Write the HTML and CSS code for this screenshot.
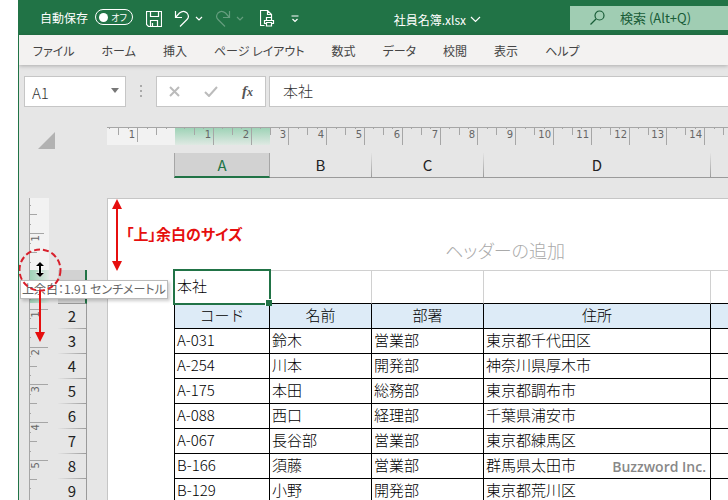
FILE: index.html
```html
<!DOCTYPE html>
<html lang="ja">
<head>
  <meta charset="UTF-8">
  <title>社員名簿.xlsx</title>
  <link rel="stylesheet" href="styles.css">
</head>
<body>

  <div class="app">
    <header class="titlebar">
      <label class="autosave">
        自動保存
        <span class="toggle"><input type="checkbox"><span>オフ</span></span>
      </label>
      <div class="quick">
        <button class="save" aria-label="上書き保存">
          <svg width="16" height="16" viewBox="0 0 16 16"><path d="M.5 .5h15v15h-13l-2-2zM4.500 .5v5h8v-5M4.500 15.500v-6h7v6M6.500 15v-3"/></svg>
        </button>
        <button class="undo" aria-label="元に戻す">
          <svg width="16" height="18" viewBox="0 0 16 18"><path d="M1.500 1v6.500h6.500M1.500 7.500l4-4.500c3-2.500 6-1.500 7.500 0 2 2.500 1.500 5 0 6.500l-7 7"/></svg>
        </button>
        <button class="drop" aria-label="元に戻す一覧">
          <svg width="8" height="5" viewBox="0 0 8 5"><path d="M1 1l3 3 3-3"/></svg>
        </button>
        <button class="redo" aria-label="やり直し" disabled>
          <svg width="16" height="18" viewBox="0 0 16 18"><path d="M14.500 1v6.500h-6.500M14.500 7.500l-4-4.500c-3-2.500-6-1.500-7.500 0-2 2.500-1.500 5 0 6.500l7 7"/></svg>
        </button>
        <button class="drop" aria-label="やり直し一覧" disabled>
          <svg width="8" height="5" viewBox="0 0 8 5"><path d="M1 1l3 3 3-3"/></svg>
        </button>
        <button class="print" aria-label="印刷プレビュー">
          <svg width="15" height="17" viewBox="0 0 15 17"><path d="M4.500 15.500h-4v-15h7l4 4v3M7.500 .5v4h4M6.500 10.500v-3h5v3M6.500 13.500h-2v-3h9v3h-2M6.500 12.500h5v3.500h-5z"/></svg>
        </button>
        <button class="more" aria-label="ツールバーのカスタマイズ">
          <svg width="8" height="8" viewBox="0 0 8 8"><path d="M.5 1h7M1.500 4l2.500 2.500 2.500-2.500"/></svg>
        </button>
      </div>
      <button class="filename">社員名簿.xlsx
        <svg width="11" height="7" viewBox="0 0 11 7"><path d="M1 1l4.500 4.500 4.500-4.500"/></svg>
      </button>
      <label class="search">
        <svg width="15" height="15" viewBox="0 0 15 15"><circle cx="9.500" cy="5.500" r="4.500"/><path d="M6 9l-5.500 5.500"/></svg>
        <input type="search" placeholder="検索 (Alt+Q)" aria-label="検索">
      </label>
    </header>

    <nav class="tabs">
      <button>ファイル</button>
      <button>ホーム</button>
      <button>挿入</button>
      <button>ページ レイアウト</button>
      <button>数式</button>
      <button>データ</button>
      <button>校閲</button>
      <button>表示</button>
      <button>ヘルプ</button>
    </nav>

    <div class="formula-bar">
      <div class="name-box">
        <input type="text" value="A1" aria-label="名前ボックス">
        <button aria-label="名前の一覧"><svg width="8" height="5" viewBox="0 0 8 5"><path d="M0 0h8l-4 5z"/></svg></button>
      </div>
      <div class="grip"></div>
      <div class="entry-buttons">
        <button aria-label="キャンセル"><svg width="11" height="11" viewBox="0 0 11 11"><path d="M1 1l9 9M10 1l-9 9"/></svg></button>
        <button aria-label="入力"><svg width="14" height="11" viewBox="0 0 14 11"><path d="M1 6l4 4 8-9"/></svg></button>
        <button class="fx" aria-label="関数の挿入">f<small>x</small></button>
      </div>
      <input class="formula" type="text" value="本社" aria-label="数式バー">
    </div>

    <main class="workspace">
      <button class="select-all" aria-label="すべて選択"></button>
      <svg class="ruler ruler-h" id="ruler-h"></svg>

      <div class="col-heads">
        <span class="selected">A</span>
        <span>B</span>
        <span>C</span>
        <span>D</span>
        <span></span>
      </div>

      <svg class="ruler ruler-v" id="ruler-v"></svg>

      <div class="row-heads">
        <span class="selected"></span>
        <span>2</span>
        <span>3</span>
        <span>4</span>
        <span>5</span>
        <span>6</span>
        <span>7</span>
        <span>8</span>
        <span>9</span>
      </div>

      <section class="page">
        <div class="page-header">ヘッダーの追加</div>
        <table>
          <colgroup>
            <col class="col-a"><col class="col-b"><col class="col-c"><col class="col-d"><col>
          </colgroup>
          <tbody>
            <tr class="blank"><td class="active">本社</td><td></td><td></td><td></td><td></td></tr>
            <tr><th>コード</th><th>名前</th><th>部署</th><th>住所</th><th></th></tr>
            <tr><td>A-031</td><td>鈴木</td><td>営業部</td><td>東京都千代田区</td><td></td></tr>
            <tr><td>A-254</td><td>川本</td><td>開発部</td><td>神奈川県厚木市</td><td></td></tr>
            <tr><td>A-175</td><td>本田</td><td>総務部</td><td>東京都調布市</td><td></td></tr>
            <tr><td>A-088</td><td>西口</td><td>経理部</td><td>千葉県浦安市</td><td></td></tr>
            <tr><td>A-067</td><td>長谷部</td><td>営業部</td><td>東京都練馬区</td><td></td></tr>
            <tr><td>B-166</td><td>須藤</td><td>営業部</td><td>群馬県太田市</td><td></td></tr>
            <tr><td>B-129</td><td>小野</td><td>開発部</td><td>東京都荒川区</td><td></td></tr>
          </tbody>
        </table>
      </section>

      <!-- 説明用の注釈 -->
      <div class="tooltip">上余白：1.91 センチメートル</div>
      <svg class="margin-arrow" width="12" height="72" viewBox="0 0 12 72">
        <path d="M6 0l5 10h-4v52h4l-5 10-5-10h4v-52h-4z"/>
      </svg>
      <div class="margin-note">「上」余白のサイズ</div>
      <svg class="drag-mark" width="44" height="94" viewBox="0 0 44 94">
        <circle cx="22" cy="22" r="20.500"/>
        <path class="drag-arrow" d="M21 43h2v41h4l-5 10-5-10h4z"/>
        <path class="cursor" d="M22 14l4 4h-3v7h3l-4 4-4-4h3v-7h-3z"/>
      </svg>
      <div class="credit">Buzzword Inc.</div>
    </main>
  </div>

  <script src="script.js"></script>
</body>
</html>
```
FILE: styles.css
```css
:root {
  --green: #217346;
  --gray: #e6e6e6;
  --line: #c6c6c6;
  --tick: #a6a6a6;
  --red: #e60f0f;
}
* {
  box-sizing: border-box;
  margin: 0;
  padding: 0;
}
body {
  background: #fff;
  color: #222;
  font-family: "Noto Sans CJK JP", sans-serif;
  font-size: 12px;
}
button, input {
  border: none;
  background: none;
  color: inherit;
  font: inherit;
  outline: none;
}
svg {
  display: block;
  flex: none;
}
.app {
  height: 100vh;
  margin-left: 18px;
  border-left: 1px solid var(--green);
  background: var(--gray);
  overflow: hidden;
}

/* タイトルバー */
.titlebar {
  display: flex;
  align-items: center;
  height: 35px;
  padding-left: 21px;
  background: var(--green);
  color: #fff;
}
.titlebar svg {
  fill: none;
  stroke: currentColor;
  stroke-width: 1.2;
}
.autosave {
  display: flex;
  align-items: center;
  gap: 7px;
  padding-bottom: 1px;
  white-space: nowrap;
}
.toggle {
  display: flex;
  align-items: center;
  justify-content: space-between;
  width: 38px;
  height: 16px;
  padding: 0 5px 0 3px;
  border: 1px solid #fff;
  border-radius: 8px;
  font-size: 9px;
  font-feature-settings: "palt";
}
.toggle input {
  flex: none;
  appearance: none;
  width: 9px;
  height: 9px;
  border-radius: 50%;
  background: #fff;
}
.quick {
  display: flex;
  align-items: center;
  padding: 2px 0 0 13px;
}
.quick :disabled {
  opacity: .3;
}
.undo {
  margin-left: 12px;
}
.drop {
  margin-left: 5px;
}
.redo {
  margin-left: 12px;
}
.print {
  margin-left: 16px;
}
.more {
  margin-left: 12px;
}
.print + .more {
  margin-left: 16px;
}
.filename {
  display: flex;
  align-items: center;
  gap: 4px;
  margin-left: auto;
  padding-top: 3px;
  white-space: nowrap;
}
.search {
  display: flex;
  align-items: center;
  gap: 15px;
  width: 158px;
  height: 24px;
  margin-left: 89px;
  padding-left: 20px;
  background: #a0cdb3;
  color: #185c37;
  font-size: 13px;
}
.search input {
  flex: 1;
  min-width: 0;
}
.search input::placeholder {
  color: #185c37;
  opacity: 1;
}

/* リボンのタブ */
.tabs {
  display: flex;
  align-items: center;
  gap: 27px;
  position: relative;
  height: 30px;
  padding-left: 14px;
  background: #f3f2f1;
  box-shadow: 0 1px 4px rgba(0, 0, 0, .25);
  color: #444;
  white-space: nowrap;
}
.tabs button {
  font-feature-settings: "palt";
}

/* 数式バー */
.formula-bar {
  display: flex;
  height: 62px;
  padding: 11px 0 20px 5px;
  font-size: 15px;
  font-weight: 300;
  color: #333;
}
.name-box, .entry-buttons, .formula {
  border: 1px solid var(--line);
  background: #fff;
}
.name-box {
  display: flex;
  width: 102px;
  padding: 2px 6px 0 7px;
}
.name-box input {
  flex: 1;
  min-width: 0;
}
.name-box button {
  padding-bottom: 4px;
}
.name-box path {
  fill: #777;
}
.grip {
  width: 2px;
  height: 12px;
  margin: 9px 14px;
  background: repeating-linear-gradient(#aaa 0 2px, transparent 2px 5px);
}
.entry-buttons {
  display: flex;
  justify-content: space-between;
  align-items: center;
  width: 110px;
  padding: 0 12px;
}
.entry-buttons path {
  fill: none;
  stroke: #bbb;
  stroke-width: 2;
}
.fx {
  color: #555;
  font: italic bold 15px "Liberation Serif", serif;
}
.fx small {
  font-size: 12px;
}
.formula {
  flex: 1;
  margin-left: 3px;
  padding: 0 13px 2px;
  border-right: none;
}

/* シート */
.workspace {
  display: grid;
  grid-template-columns: 20px 9px 29px 20px 1fr;
  grid-template-rows: 18px 8px 25px 20px auto;
  position: relative;
  padding-left: 10px;
}
.select-all {
  grid-area: 1 / 1 / 3 / 4;
  width: 17px;
  height: 17px;
  margin: 5px 0 0 9px;
  background: #b2b2b2;
  clip-path: polygon(100% 0, 100% 100%, 0 100%);
}
.ruler line {
  stroke: var(--tick);
  shape-rendering: crispEdges;
}
.ruler text {
  fill: #666;
  font: 10px "DejaVu Sans", sans-serif;
  text-anchor: end;
}
.ruler-h {
  grid-area: 1 / 5;
  width: 100%;
  height: 18px;
  border-top: 1px solid var(--tick);
  background:
    linear-gradient(#9fd3b7, #dfe9e3) 68px 0 / 95px 100% no-repeat,
    linear-gradient(#f2f2f2, #f2f2f2) 0 0 / 68px 100% no-repeat;
}
.ruler-v {
  grid-area: 5 / 1;
  width: 20px;
  height: 310px;
  border-left: 1px solid var(--tick);
  background:
    linear-gradient(90deg, #9fd3b7, #dfe9e3) 0 72px / 100% 33px no-repeat,
    linear-gradient(#f2f2f2, #f2f2f2) 0 0 / 100% 72px no-repeat;
}
.col-heads {
  grid-area: 3 / 5;
  display: grid;
  grid-template-columns: 96px 102px 112px 227px 1fr;
  margin-left: 67px;
  font-size: 15px;
  line-height: 23px;
  text-align: center;
}
.col-heads span {
  border-right: 1px solid;
  border-bottom: 1px solid #999;
  border-image: linear-gradient(transparent, #999) 1;
}
.col-heads span:last-child {
  border-right: none;
}
.col-heads .selected {
  border-left: 1px solid var(--tick);
  border-right-color: var(--tick);
  border-bottom: 2px solid var(--green);
  border-image: none;
  background: #d2d2d2;
  color: var(--green);
}
.row-heads {
  grid-area: 5 / 3;
  padding-top: 72px;
  font-size: 15px;
  line-height: 23px;
  text-align: center;
}
.row-heads span {
  display: block;
  height: 25px;
  border-right: 1px solid #999;
  border-bottom: 1px solid;
  border-image: linear-gradient(90deg, transparent, #999) 1;
}
.row-heads .selected {
  height: 34px;
  border-right: 2px solid var(--green);
  border-bottom-color: #999;
  border-image: none;
  background: #d2d2d2;
}

/* 印刷ページ */
.page {
  grid-area: 5 / 5;
  padding-left: 66px;
  border: 1px solid var(--line);
  border-width: 1px 0 0 1px;
  background: #fff;
}
.page-header {
  height: 71px;
  padding: 34px 0 0 271px;
  color: #aaa;
  font-size: 18px;
  font-weight: 300;
  font-feature-settings: "palt";
  line-height: 34px;
  white-space: nowrap;
}
table {
  width: 100%;
  table-layout: fixed;
  border-spacing: 0;
  color: #000;
  font-size: 15px;
  font-weight: 300;
}
.col-a {
  width: 96px;
}
.col-b {
  width: 102px;
}
.col-c {
  width: 112px;
}
.col-d {
  width: 227px;
}
th, td {
  height: 25px;
  padding: 0 0 2px 2px;
  border-right: 1px solid #000;
  border-bottom: 1px solid #000;
  line-height: 22px;
  text-align: left;
  white-space: nowrap;
}
th:first-child, td:first-child {
  border-left: 1px solid #000;
}
th:last-child, td:last-child {
  border-right: none;
}
th {
  padding-left: 0;
  background: #ddebf7;
  font-weight: 300;
  text-align: center;
}
.blank td {
  height: 34px;
  border-top: 1px solid #d0d0d0;
  border-right-color: #d0d0d0;
}
.active {
  position: relative;
}
.active::before {
  content: "";
  position: absolute;
  inset: -2px;
  border: 2px solid var(--green);
}
.active::after {
  content: "";
  position: absolute;
  right: -3px;
  bottom: -3px;
  width: 6px;
  height: 6px;
  border: 1px solid #fff;
  border-width: 1px 0 0 1px;
  background: var(--green);
}

/* 注釈 */
.tooltip {
  position: absolute;
  left: 1px;
  top: 153px;
  height: 19px;
  padding: 0 1px;
  border: 1px solid #bbb;
  background: #fff;
  box-shadow: 2px 2px 3px rgba(0, 0, 0, .2);
  color: #666;
  font-size: 12px;
  font-feature-settings: "palt";
  line-height: 16px;
  white-space: nowrap;
}
.margin-arrow {
  position: absolute;
  left: 92px;
  top: 72px;
  fill: var(--red);
}
.margin-note {
  position: absolute;
  left: 107px;
  top: 95px;
  color: var(--red);
  font-size: 15px;
  font-weight: bold;
  font-feature-settings: "palt";
  line-height: 24px;
}
.drag-mark {
  position: absolute;
  left: -1px;
  top: 121px;
}
.drag-mark circle {
  fill: none;
  stroke: #d8202c;
  stroke-width: 2;
  stroke-dasharray: 6 3;
}
.drag-arrow {
  fill: var(--red);
}
.cursor {
  stroke: #fff;
  stroke-width: 1;
  paint-order: stroke;
}
.credit {
  position: absolute;
  right: 22px;
  top: 330px;
  color: #888;
  font: 600 14px/20px "Open Sans", sans-serif;
}
```
FILE: script.js
```js
// 1cmあたりのピクセル数
const CM = 37.8;

function add(svg, name, attrs, text) {
  const el = document.createElementNS('http://www.w3.org/2000/svg', name);
  for (const key in attrs) el.setAttribute(key, attrs[key]);
  if (text) el.textContent = text;
  svg.appendChild(el);
}

// from〜to を 0.25cm 刻みで描く (0 が余白の境界)
function drawRuler(id, zero, from, to, vertical) {
  const svg = document.getElementById(id);
  for (let i = from * 4; i <= to * 4; i++) {
    if (i === 0) continue;
    const pos = Math.round(zero + i * CM / 4);
    const full = i % 4 === 0;
    let len = i % 2 === 0 ? 7 : 1;
    if (full) len = i < 0 ? 14 : 18;

    if (vertical) {
      add(svg, 'line', { x1: 0, x2: len, y1: pos, y2: pos });
      if (full) add(svg, 'text', { transform: `translate(9 ${pos + 2}) rotate(-90)` }, Math.abs(i / 4));
    } else {
      add(svg, 'line', { x1: pos, x2: pos, y1: 0, y2: len });
      if (full) add(svg, 'text', { x: pos - 2, y: 10 }, Math.abs(i / 4));
    }
  }
}

// 画面に入る目盛りだけ描く
const width = document.getElementById('ruler-h').clientWidth;
drawRuler('ruler-h', 68, -1.75, Math.floor((width - 68) / CM * 4) / 4, false);
drawRuler('ruler-v', 73, -1.75, 5.75, true);
```
